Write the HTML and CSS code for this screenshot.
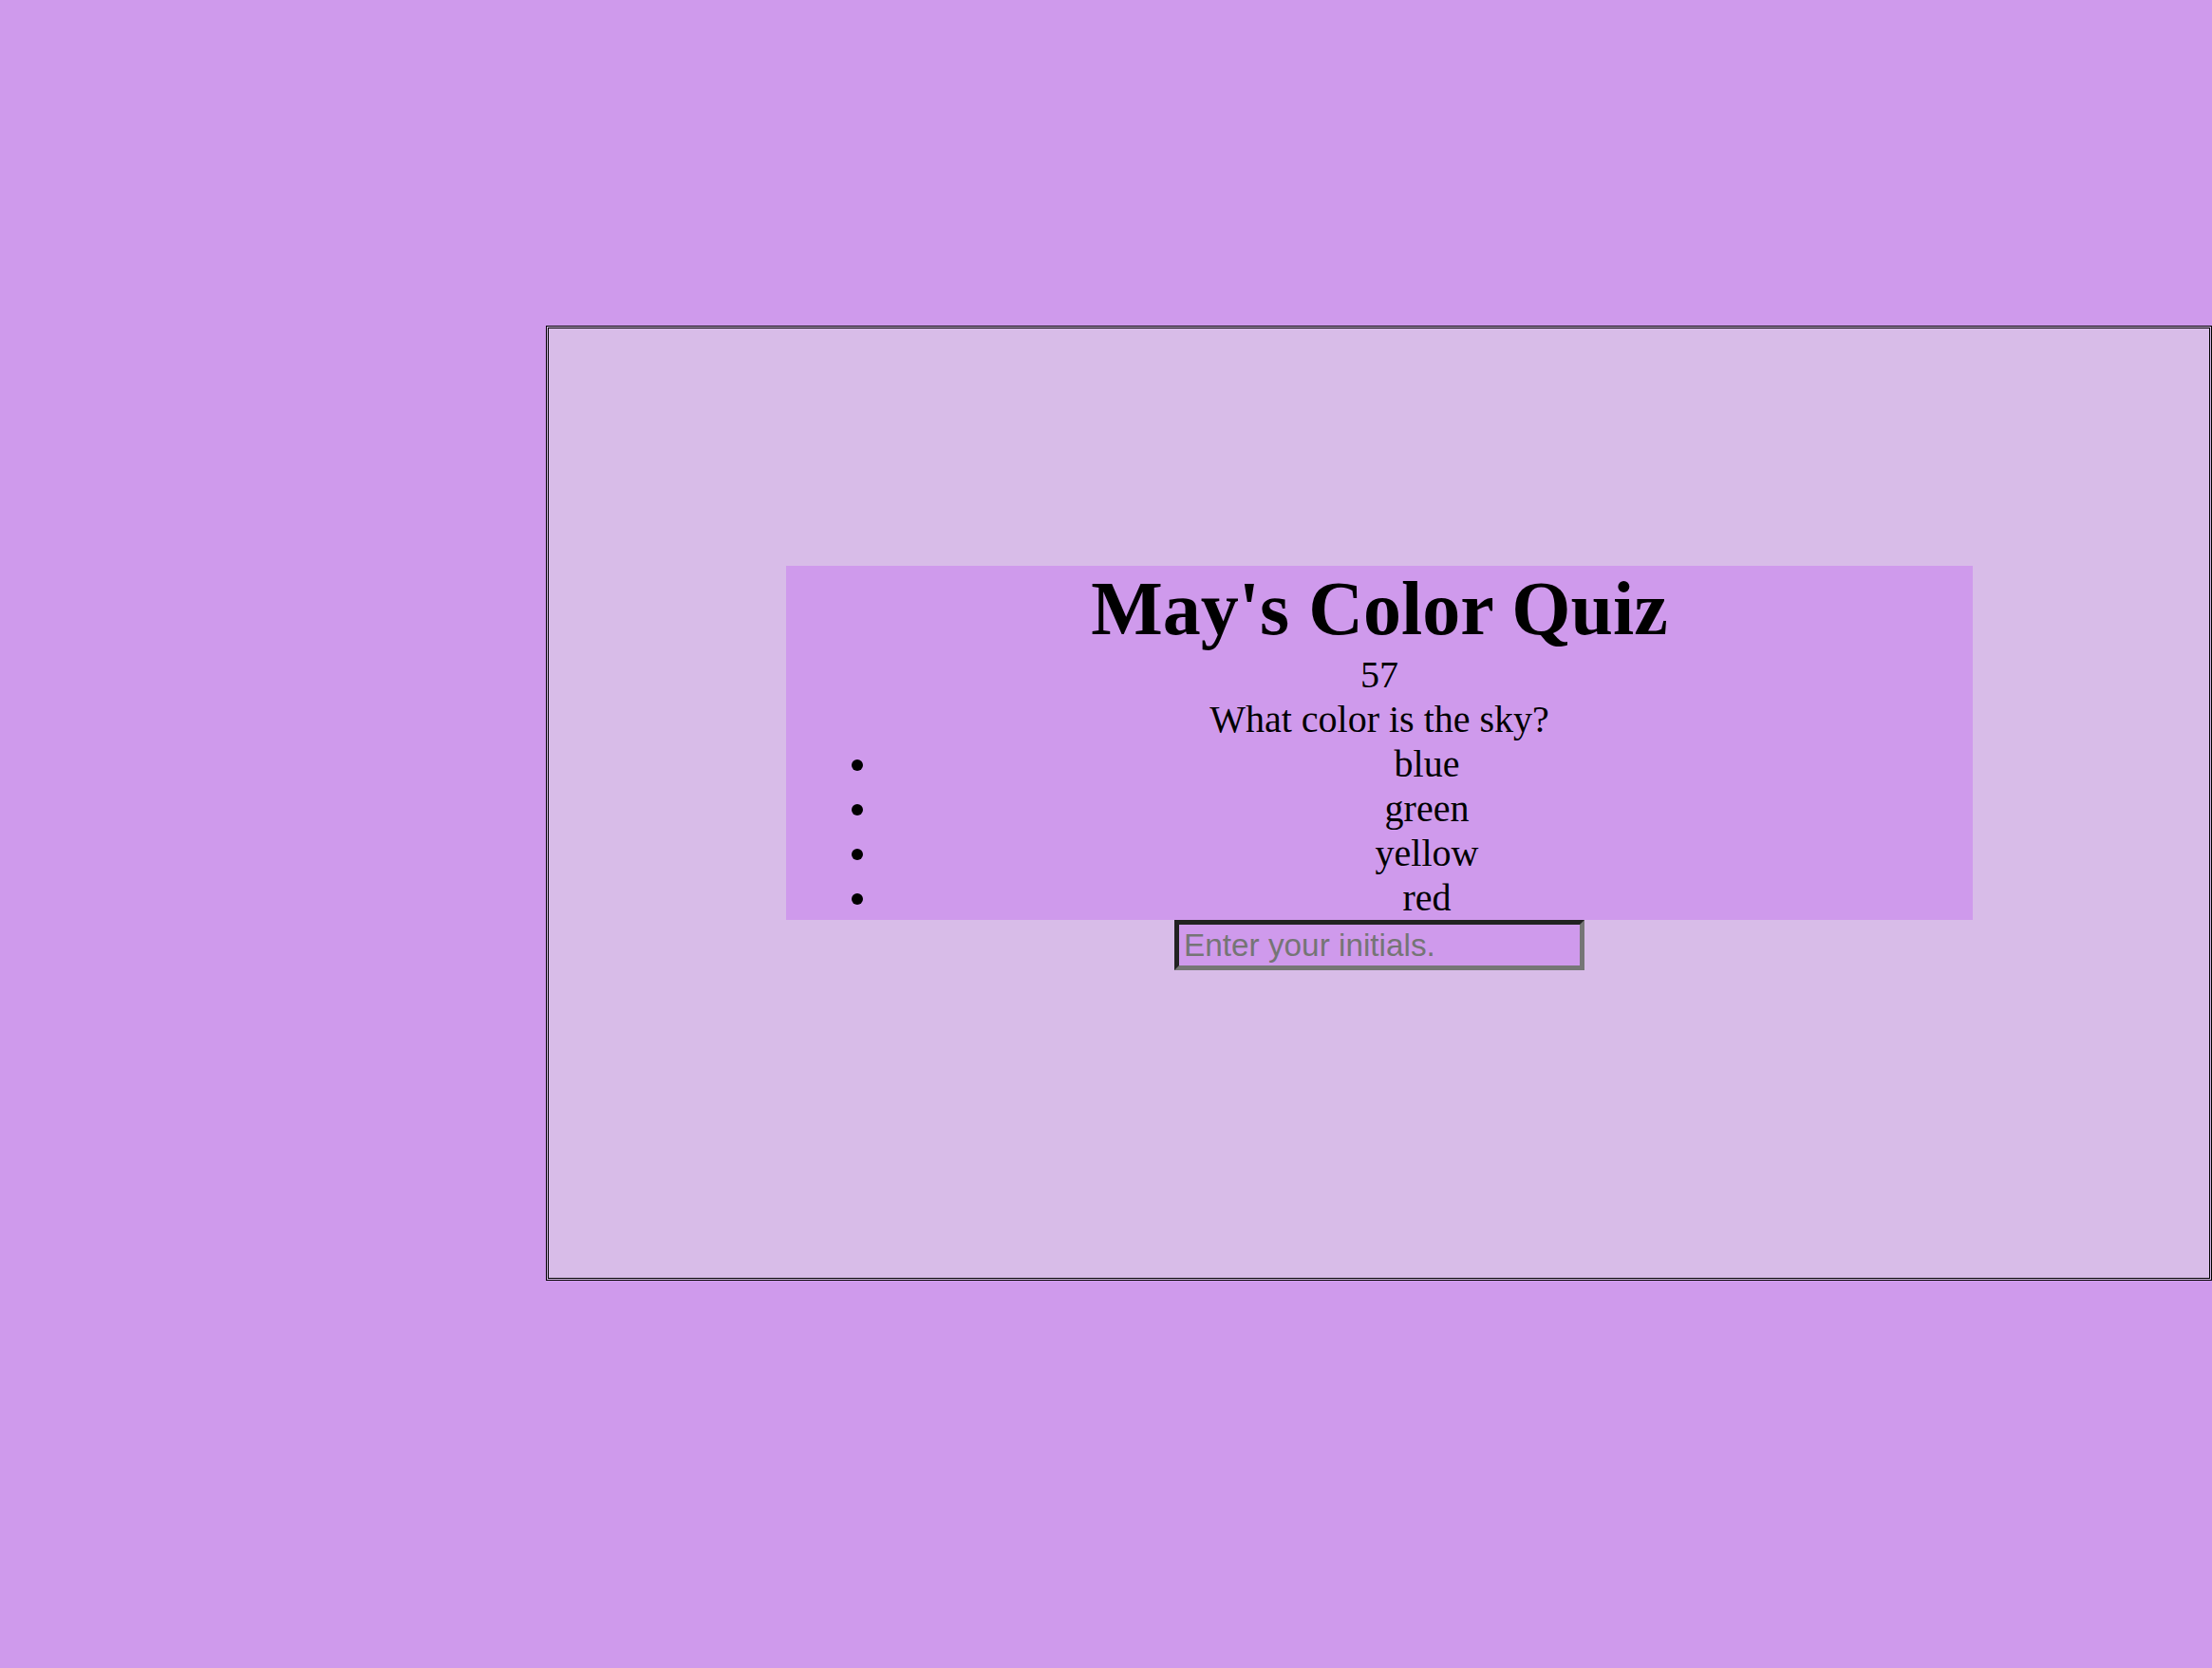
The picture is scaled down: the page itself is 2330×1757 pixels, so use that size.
FILE: index.html
```html
<!DOCTYPE html>
<html lang="en">
<head>
<meta charset="utf-8">
<title>May's Color Quiz</title>
<link rel="stylesheet" href="styles.css">
</head>
<body>
<div class="frame">
  <div class="quiz">
    <h1 class="title">May's Color Quiz</h1>
    <div class="timer">57</div>
    <div class="question">What color is the sky?</div>
    <ul class="choices">
      <li>blue</li>
      <li>green</li>
      <li>yellow</li>
      <li>red</li>
    </ul>
  </div>
  <input class="initials" type="text" placeholder="Enter your initials.">
</div>
</body>
</html>
```
FILE: styles.css
```css
html, body {
  margin: 0;
  padding: 0;
  background: #cf9aec;
}
body {
  font-family: "Liberation Serif", "Times New Roman", serif;
  color: #000;
  overflow: hidden;
}
.frame {
  box-sizing: border-box;
  width: 1755px;
  height: 1006px;
  margin: 343px 0 0 575px;
  padding: 250px 249px 250px 250px;
  border: 3px double #000;
  background: #d8bce8;
}
.quiz {
  background: #cf9aec;
  text-align: center;
  font-size: 40px;
}
.title {
  margin: 0;
  font-size: 80px;
  font-weight: bold;
}
.timer, .question {
  margin: 0;
}
.choices {
  margin: 0;
  padding: 0 0 0 100px;
}
.choices li {
  text-align: center;
}
.initials {
  display: block;
  box-sizing: border-box;
  width: 432px;
  height: 53px;
  margin: 0 auto;
  padding: 2px 5px;
  border-style: solid;
  border-width: 5px;
  border-color: #222 #767676 #767676 #222;
  background: #cf9aec;
  font-family: "Liberation Sans", Arial, sans-serif;
  font-size: 33.33px;
  color: #000;
  outline: none;
}
.initials::placeholder {
  color: #757575;
}
```
